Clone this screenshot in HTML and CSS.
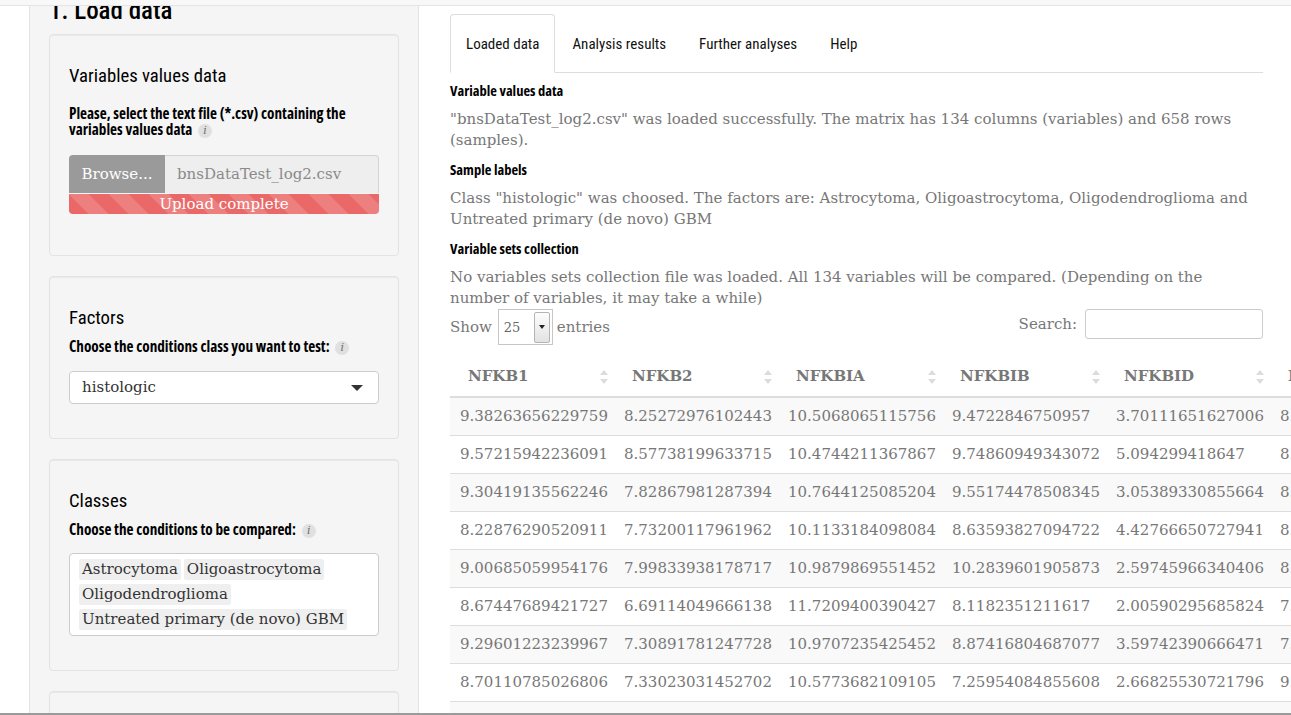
FILE: index.html
```html
<!DOCTYPE html>
<html lang="en">
<head>
<meta charset="utf-8">
<title>Load data</title>
<link rel="stylesheet" href="styles.css">
</head>
<body>
<div class="viewport">
  <div class="navbar"></div>
  <div class="page">
    <aside class="sidebar">
      <h3 class="section-title">1. Load data</h3>

      <div class="well">
        <h4 class="well-title">Variables values data</h4>
        <label class="ctl-label ctl-label-first">Please, select the text file (*.csv) containing the variables values data <span class="info">i</span></label>
        <div class="file-input">
          <span class="browse">Browse...</span>
          <span class="file-name">bnsDataTest_log2.csv</span>
        </div>
        <div class="progress">Upload complete</div>
      </div>

      <div class="well">
        <h4 class="well-title">Factors</h4>
        <label class="ctl-label">Choose the conditions class you want to test: <span class="info">i</span></label>
        <div class="select">
          <span>histologic</span>
          <span class="caret"></span>
        </div>
      </div>

      <div class="well">
        <h4 class="well-title">Classes</h4>
        <label class="ctl-label">Choose the conditions to be compared: <span class="info">i</span></label>
        <div class="multi">
          <span class="chip">Astrocytoma</span>
          <span class="chip">Oligoastrocytoma</span>
          <span class="chip">Oligodendroglioma</span>
          <span class="chip">Untreated primary (de novo) GBM</span>
        </div>
      </div>

      <div class="well well-tail">
        <h4 class="well-title">Variable sets</h4>
      </div>
    </aside>

    <main class="main">
      <ul class="tabs">
        <li class="active"><a>Loaded data</a></li>
        <li><a>Analysis results</a></li>
        <li><a>Further analyses</a></li>
        <li><a>Help</a></li>
      </ul>

      <div class="tab-content">
        <h5>Variable values data</h5>
        <p>"bnsDataTest_log2.csv" was loaded successfully. The matrix has 134 columns (variables) and 658 rows (samples).</p>
        <h5>Sample labels</h5>
        <p>Class "histologic" was choosed. The factors are: Astrocytoma, Oligoastrocytoma, Oligodendroglioma and Untreated primary (de novo) GBM</p>
        <h5>Variable sets collection</h5>
        <p class="p-last">No variables sets collection file was loaded. All 134 variables will be compared. (Depending on the number of variables, it may take a while)</p>

        <div class="dt-controls">
          <div class="dt-length">
            <span>Show</span>
            <span class="dt-select"><span class="dt-val">25</span><span class="dt-btn"><span class="dt-tri"></span></span></span>
            <span>entries</span>
          </div>
          <div class="dt-search">
            <span>Search:</span>
            <span class="dt-input"></span>
          </div>
        </div>

        <table class="dt">
          <thead>
            <tr>
              <th><div class="th-in"><span>NFKB1</span><svg class="sort" viewBox="0 0 8 14" width="8" height="14"><path d="M4 0 L8 5 L0 5 Z M4 14 L8 9 L0 9 Z"/></svg></div></th>
              <th><div class="th-in"><span>NFKB2</span><svg class="sort" viewBox="0 0 8 14" width="8" height="14"><path d="M4 0 L8 5 L0 5 Z M4 14 L8 9 L0 9 Z"/></svg></div></th>
              <th><div class="th-in"><span>NFKBIA</span><svg class="sort" viewBox="0 0 8 14" width="8" height="14"><path d="M4 0 L8 5 L0 5 Z M4 14 L8 9 L0 9 Z"/></svg></div></th>
              <th><div class="th-in"><span>NFKBIB</span><svg class="sort" viewBox="0 0 8 14" width="8" height="14"><path d="M4 0 L8 5 L0 5 Z M4 14 L8 9 L0 9 Z"/></svg></div></th>
              <th><div class="th-in"><span>NFKBID</span><svg class="sort" viewBox="0 0 8 14" width="8" height="14"><path d="M4 0 L8 5 L0 5 Z M4 14 L8 9 L0 9 Z"/></svg></div></th>
              <th><div class="th-in"><span>NFKBIE</span><svg class="sort" viewBox="0 0 8 14" width="8" height="14"><path d="M4 0 L8 5 L0 5 Z M4 14 L8 9 L0 9 Z"/></svg></div></th>
              <th><div class="th-in"><span>NFKBIZ</span><svg class="sort" viewBox="0 0 8 14" width="8" height="14"><path d="M4 0 L8 5 L0 5 Z M4 14 L8 9 L0 9 Z"/></svg></div></th>
            </tr>
          </thead>
          <tbody>
            <tr><td>9.38263656229759</td><td>8.25272976102443</td><td>10.5068065115756</td><td>9.4722846750957</td><td>3.70111651627006</td><td>8.41736212985143</td><td>7.90321871645221</td></tr>
            <tr><td>9.57215942236091</td><td>8.57738199633715</td><td>10.4744211367867</td><td>9.74860949343072</td><td>5.094299418647</td><td>8.80524019187254</td><td>8.12745019384726</td></tr>
            <tr><td>9.30419135562246</td><td>7.82867981287394</td><td>10.7644125085204</td><td>9.55174478508345</td><td>3.05389330855664</td><td>8.22906416730581</td><td>7.65518207431094</td></tr>
            <tr><td>8.22876290520911</td><td>7.73200117961962</td><td>10.1133184098084</td><td>8.63593827094722</td><td>4.42766650727941</td><td>8.06631578291747</td><td>7.43309127765302</td></tr>
            <tr><td>9.00685059954176</td><td>7.99833938178717</td><td>10.9879869551452</td><td>10.2839601905873</td><td>2.59745966340406</td><td>8.52104389671235</td><td>8.30187476512093</td></tr>
            <tr><td>8.67447689421727</td><td>6.69114049666138</td><td>11.7209400390427</td><td>8.1182351211617</td><td>2.00590295685824</td><td>7.88120463590183</td><td>7.02847362201957</td></tr>
            <tr><td>9.29601223239967</td><td>7.30891781247728</td><td>10.9707235425452</td><td>8.87416804687077</td><td>3.59742390666471</td><td>7.94582716302845</td><td>7.71930556028413</td></tr>
            <tr><td>8.70110785026806</td><td>7.33023031452702</td><td>10.5773682109105</td><td>7.25954084855608</td><td>2.66825530721796</td><td>9.03716529841207</td><td>8.56207193348210</td></tr>
            <tr><td>9.07533937527484</td><td>6.76382812382953</td><td>9.54745076314922</td><td>9.40181820169834</td><td>3.58872357446513</td><td>8.31425067719846</td><td>7.84410925637702</td></tr>
          </tbody>
        </table>
      </div>
    </main>
  </div>
</div>
</body>
</html>
```

FILE: styles.css
```css
html, body {
  margin: 0;
  padding: 0;
}

body {
  font-family: "DejaVu Serif", "Liberation Serif", serif;
  font-size: 15px;
  line-height: 21px;
  color: #777;
  background: #fff;
  overflow: hidden;
}

.viewport {
  position: relative;
  height: 713px;
  overflow: hidden;
  border-bottom: 2px solid #9a9a9a;
}

.navbar {
  position: absolute;
  top: 0;
  left: 0;
  right: 0;
  height: 5px;
  background: #f8f8f8;
  border-bottom: 1px solid #e4e4e4;
  z-index: 5;
}

.page {
  display: flex;
  margin-top: -4px;
  padding-left: 29px;
  gap: 31px;
}

/* ---------- sidebar ---------- */
.sidebar {
  flex: 0 0 390px;
  box-sizing: border-box;
  background: #f5f5f5;
  border: 1px solid #e3e3e3;
  border-top: 0;
  padding: 0 19px;
  color: #000;
  font-family: "Roboto Condensed", "Roboto", sans-serif;
  font-stretch: 75%;
}

.section-title {
  font-size: 25px;
  line-height: 30px;
  font-weight: 500;
  margin: 0 0 8px;
}

.well {
  background: #f5f5f5;
  border: 1px solid #e3e3e3;
  border-radius: 4px;
  padding: 19px;
  margin-bottom: 20px;
  box-shadow: inset 0 1px 1px rgba(0, 0, 0, 0.05);
}

.well-tail {
  height: 120px;
}

.well-title {
  font-size: 18.7px;
  line-height: 22px;
  font-weight: normal;
  margin: 11px 0 0;
}

.ctl-label {
  display: block;
  font-family: "Open Sans", sans-serif;
  font-stretch: 75%;
  font-size: 15.2px;
  line-height: 16px;
  font-weight: bold;
  margin-top: 9px;
}

.ctl-label-first {
  margin-top: 18px;
}

.info {
  display: inline-block;
  width: 14px;
  height: 14px;
  margin: -4px 0 -4px 3px;
  border-radius: 50%;
  background: #e0e0e0;
  color: #6f6f6f;
  font-family: "DejaVu Serif", serif;
  font-style: italic;
  font-weight: normal;
  font-stretch: normal;
  font-size: 11px;
  line-height: 14px;
  text-align: center;
  vertical-align: middle;
}

.file-input {
  display: flex;
  height: 38px;
  margin-top: 18px;
  font-family: "DejaVu Serif", serif;
  font-stretch: normal;
  font-size: 15px;
}

.browse {
  flex: 0 0 96px;
  display: flex;
  align-items: center;
  justify-content: center;
  background: #9a9a9a;
  color: #fff;
  border-radius: 4px 0 0 0;
}

.file-name {
  flex: 1;
  display: flex;
  align-items: center;
  padding-left: 12px;
  background: #eee;
  border: 1px solid #d4d4d4;
  border-left: 0;
  border-bottom: 0;
  border-radius: 0 4px 0 0;
  color: #8a8a8a;
}

.progress {
  height: 20px;
  margin: 1px 0 22px;
  border-radius: 0 0 4px 4px;
  background-color: #ea6868;
  background-image: linear-gradient(45deg,
    rgba(255, 255, 255, 0.15) 25%, transparent 25%,
    transparent 50%, rgba(255, 255, 255, 0.15) 50%,
    rgba(255, 255, 255, 0.15) 75%, transparent 75%, transparent);
  background-size: 40px 40px;
  color: #fff;
  text-align: center;
  font-family: "DejaVu Serif", serif;
  font-stretch: normal;
  font-size: 15px;
  line-height: 20px;
}

.select {
  margin: 17px 0 15px;
  height: 33px;
  box-sizing: border-box;
  display: flex;
  align-items: center;
  justify-content: space-between;
  padding: 0 15px 0 12px;
  background: #fff;
  border: 1px solid #ccc;
  border-radius: 4px;
  color: #333;
  font-family: "DejaVu Serif", serif;
  font-stretch: normal;
  font-size: 15px;
}

.caret {
  width: 0;
  height: 0;
  border-left: 6px solid transparent;
  border-right: 6px solid transparent;
  border-top: 6px solid #333;
}

.multi {
  margin: 16px 0 15px;
  box-sizing: border-box;
  height: 83px;
  display: flex;
  flex-wrap: wrap;
  align-content: flex-start;
  gap: 4px 3px;
  padding: 5px 9px;
  background: #fff;
  border: 1px solid #ccc;
  border-radius: 4px;
  font-family: "DejaVu Serif", serif;
  font-stretch: normal;
  font-size: 15px;
  line-height: 21px;
  color: #333;
}

.chip {
  background: #efefef;
  padding: 0 3px;
  border-radius: 2px;
}

/* ---------- main ---------- */
.main {
  flex: 0 0 813px;
  min-width: 0;
}

.tabs {
  list-style: none;
  margin: 18px 0 0;
  padding: 0;
  display: flex;
  border-bottom: 1px solid #ddd;
  font-family: "Roboto Condensed", "Roboto", sans-serif;
  font-stretch: 75%;
  font-size: 15px;
}

.tabs li {
  margin: 0 1px -1px 0;
}

.tabs a {
  display: block;
  padding: 19px 15px 18px;
  line-height: 20px;
  border: 1px solid transparent;
  border-radius: 4px 4px 0 0;
  color: #111;
}

.tabs .active a {
  background: #fff;
  border-color: #ddd #ddd transparent;
}

.tab-content h5 {
  font-family: "Open Sans", sans-serif;
  font-stretch: 75%;
  font-size: 14.5px;
  line-height: 18px;
  font-weight: bold;
  color: #000;
  margin: 9px 0 9px;
}

.tab-content p {
  margin: 0 0 10px;
}

.tab-content p.p-last {
  margin-bottom: 0;
}

/* datatable controls */
.dt-controls {
  display: flex;
  justify-content: space-between;
  align-items: flex-start;
}

.dt-length {
  display: flex;
  align-items: center;
  height: 36px;
}

.dt-select {
  display: flex;
  align-items: center;
  box-sizing: border-box;
  width: 55px;
  height: 36px;
  margin: 0 4px 0 6px;
  border: 1px solid #c6c6c6;
  background: #fff;
  padding: 0 2px 0 5px;
}

.dt-val {
  flex: 1;
  font-size: 13px;
  color: #666;
}

.dt-btn {
  display: flex;
  align-items: center;
  justify-content: center;
  box-sizing: border-box;
  width: 16px;
  height: 31px;
  border: 1px solid #b5b5b5;
  border-radius: 2px;
  background: linear-gradient(#fdfdfd, #e2e2e2);
}

.dt-tri {
  width: 0;
  height: 0;
  border-left: 3px solid transparent;
  border-right: 3px solid transparent;
  border-top: 4px solid #222;
}

.dt-search {
  display: flex;
  align-items: center;
  height: 30px;
  gap: 8px;
}

.dt-input {
  display: block;
  box-sizing: border-box;
  width: 178px;
  height: 30px;
  border: 1px solid #ccc;
  border-radius: 3px;
  background: #fff;
}

/* datatable */
.dt {
  margin-top: 12px;
  border-collapse: separate;
  border-spacing: 0;
  table-layout: fixed;
  width: 1148px;
}

.dt th {
  width: 164px;
  box-sizing: border-box;
  padding: 9px 6px 9px 18px;
  border-bottom: 2px solid #ddd;
  text-align: left;
  font-weight: bold;
  color: #777;
}

.th-in {
  display: flex;
  align-items: center;
  justify-content: space-between;
}

.sort {
  fill: #dcdcdc;
}

.dt td {
  padding: 8px 10px;
  border-top: 1px solid #ddd;
  white-space: nowrap;
  overflow: hidden;
}

.dt tbody tr:first-child td {
  border-top: 0;
}

.dt tbody tr:nth-child(odd) td {
  background: #f9f9f9;
}
```
